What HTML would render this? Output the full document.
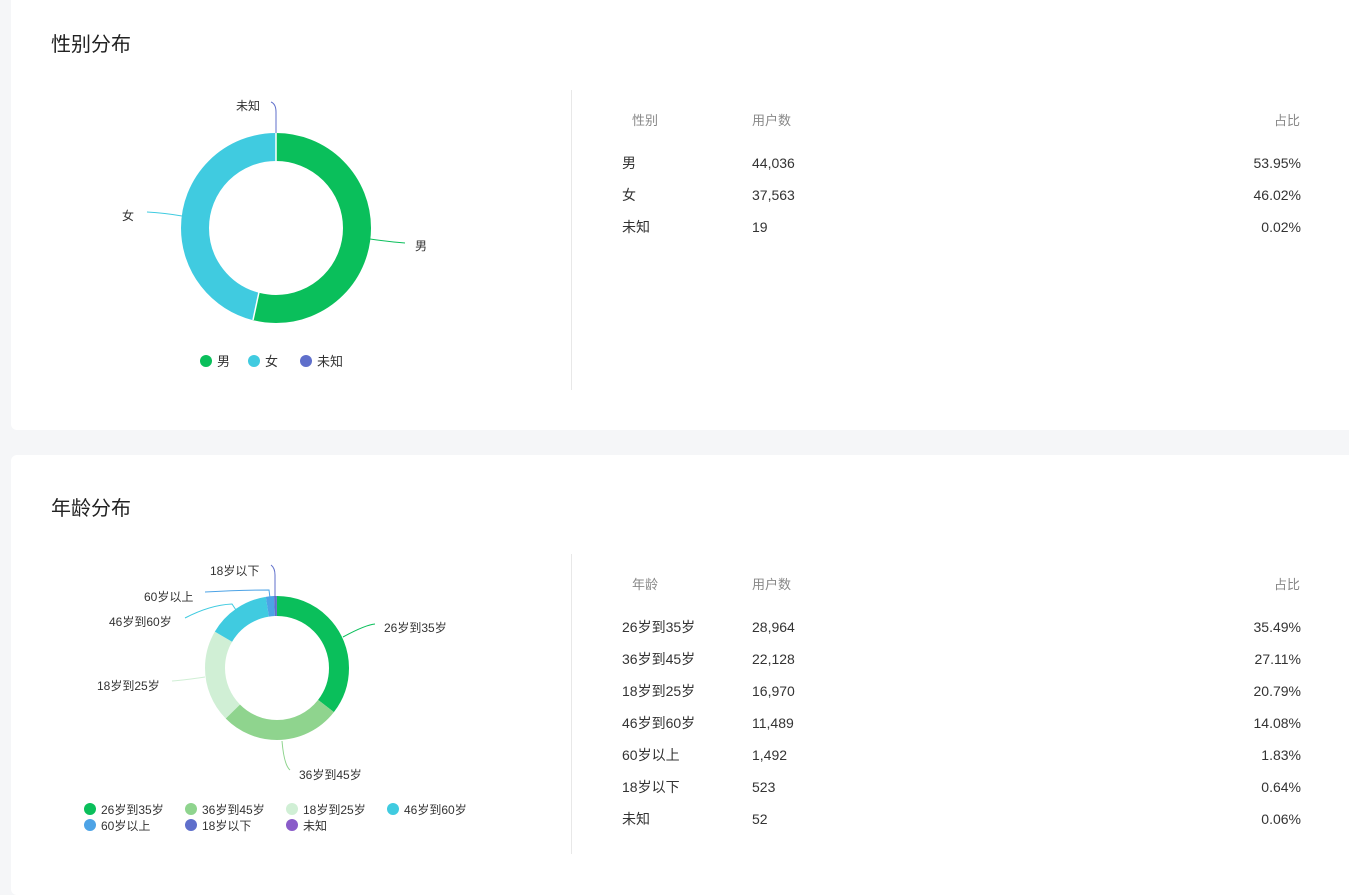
<!DOCTYPE html>
<html><head><meta charset="utf-8"><style>
body{margin:0;width:1349px;height:879px;background:#f5f6f8;font-family:"Liberation Sans","Noto Sans CJK SC",sans-serif;position:relative;overflow:hidden;color:#333}
.card{position:absolute;left:11px;width:1345px;background:#fff;border-radius:6px}
.t{position:absolute;white-space:nowrap}
.title{font-size:20px;color:#222}
.h{font-size:13px;color:#888}
.r{font-size:14px;color:#333}
.c{margin-top:-2px}
.num{right:48px;text-align:right}
.lbl{font-size:12px;color:#333}
.vl{position:absolute;left:571px;width:1px;background:#e8e8e8}
.dot{display:inline-block;width:12px;height:12px;border-radius:50%;vertical-align:-1px;margin-right:5px}
</style></head><body>
<div class="card" style="top:-10px;height:440px"></div>
<div class="card" style="top:455px;height:440px"></div>

<div class="t title" style="left:51px;top:28px">性别分布</div>
<div class="vl" style="top:90px;height:300px"></div>
<svg style="position:absolute;left:0;top:0" width="560" height="430">
<g transform="rotate(-90 276 228)" fill="none" stroke-width="28">
<circle cx="276" cy="228" r="81" stroke="#0abf5b" stroke-dasharray="274.57 600"/>
<circle cx="276" cy="228" r="81" stroke="#40cbe0" stroke-dasharray="234.21 600" stroke-dashoffset="-274.57"/>
</g>
<line x1="276" y1="133" x2="276" y2="161" stroke="#fff" stroke-width="1.5"/>
<line x1="253" y1="320" x2="259" y2="292" stroke="#fff" stroke-width="1.5"/>
<path d="M370 239 Q390 242 405 243" stroke="#0abf5b" fill="none"/>
<path d="M182 216 Q165 213 147 212" stroke="#40cbe0" fill="none"/>
<path d="M276 133 L276 112 Q276 104 271 102" stroke="#5f6fcb" fill="none"/>
</svg>
<div class="t lbl" style="left:415px;top:237px">男</div>
<div class="t lbl" style="left:122px;top:207px">女</div>
<div class="t lbl" style="left:236px;top:97px">未知</div>
<div class="t" style="left:200px;top:351px;font-size:13px"><span class="dot" style="background:#0abf5b"></span>男<span style="display:inline-block;width:18px"></span><span class="dot" style="background:#40cbe0"></span>女<span style="display:inline-block;width:22px"></span><span class="dot" style="background:#5f6fcb"></span>未知</div>

<div class="t h" style="left:632px;top:110px">性别</div>
<div class="t h" style="left:752px;top:110px">用户数</div>
<div class="t h" style="right:49px;top:110px">占比</div>
<div class="t r c" style="left:622px;top:155px">男</div><div class="t r" style="left:752px;top:155px">44,036</div><div class="t r num" style="top:155px">53.95%</div>
<div class="t r c" style="left:622px;top:187px">女</div><div class="t r" style="left:752px;top:187px">37,563</div><div class="t r num" style="top:187px">46.02%</div>
<div class="t r c" style="left:622px;top:219px">未知</div><div class="t r" style="left:752px;top:219px">19</div><div class="t r num" style="top:219px">0.02%</div>

<div class="t title" style="left:51px;top:492px">年龄分布</div>
<div class="vl" style="top:554px;height:300px"></div>
<svg style="position:absolute;left:0;top:0" width="560" height="879">
<g transform="rotate(-90 277 668)" fill="none" stroke-width="20">
<circle cx="277" cy="668" r="62" stroke="#0abf5b" stroke-dasharray="138.25 600"/>
<circle cx="277" cy="668" r="62" stroke="#8fd48e" stroke-dasharray="105.61 600" stroke-dashoffset="-138.25"/>
<circle cx="277" cy="668" r="62" stroke="#d0efd5" stroke-dasharray="80.99 600" stroke-dashoffset="-243.86"/>
<circle cx="277" cy="668" r="62" stroke="#40cbe0" stroke-dasharray="54.85 600" stroke-dashoffset="-324.85"/>
<circle cx="277" cy="668" r="62" stroke="#4da3e6" stroke-dasharray="7.13 600" stroke-dashoffset="-379.70"/>
<circle cx="277" cy="668" r="62" stroke="#5f6fcb" stroke-dasharray="2.49 600" stroke-dashoffset="-386.83"/>
</g>
<path d="M343 637 Q365 625 375 624" stroke="#0abf5b" fill="none"/>
<path d="M282 741 Q284 765 290 770" stroke="#8fd48e" fill="none"/>
<path d="M205 677 Q185 680 172 681" stroke="#d0efd5" fill="none"/>
<path d="M236 610 L232 604 Q210 605 185 618" stroke="#40cbe0" fill="none"/>
<path d="M270 598 L269 590 Q240 590 205 592" stroke="#4da3e6" fill="none"/>
<path d="M275 596 L275 575 Q275 568 271 565" stroke="#5f6fcb" fill="none"/>
</svg>
<div class="t lbl" style="left:384px;top:619px">26岁到35岁</div>
<div class="t lbl" style="left:299px;top:766px">36岁到45岁</div>
<div class="t lbl" style="left:97px;top:677px">18岁到25岁</div>
<div class="t lbl" style="left:109px;top:613px">46岁到60岁</div>
<div class="t lbl" style="left:144px;top:588px">60岁以上</div>
<div class="t lbl" style="left:210px;top:562px">18岁以下</div>
<div class="t lbl" style="left:84px;top:801px"><span class="dot" style="background:#0abf5b"></span>26岁到35岁</div>
<div class="t lbl" style="left:185px;top:801px"><span class="dot" style="background:#8fd48e"></span>36岁到45岁</div>
<div class="t lbl" style="left:286px;top:801px"><span class="dot" style="background:#d0efd5"></span>18岁到25岁</div>
<div class="t lbl" style="left:387px;top:801px"><span class="dot" style="background:#40cbe0"></span>46岁到60岁</div>
<div class="t lbl" style="left:84px;top:817px"><span class="dot" style="background:#4da3e6"></span>60岁以上</div>
<div class="t lbl" style="left:185px;top:817px"><span class="dot" style="background:#5f6fcb"></span>18岁以下</div>
<div class="t lbl" style="left:286px;top:817px"><span class="dot" style="background:#8a5cc9"></span>未知</div>

<div class="t h" style="left:632px;top:574px">年龄</div>
<div class="t h" style="left:752px;top:574px">用户数</div>
<div class="t h" style="right:49px;top:574px">占比</div>
<div class="t r c" style="left:622px;top:619px">26岁到35岁</div><div class="t r" style="left:752px;top:619px">28,964</div><div class="t r num" style="top:619px">35.49%</div>
<div class="t r c" style="left:622px;top:651px">36岁到45岁</div><div class="t r" style="left:752px;top:651px">22,128</div><div class="t r num" style="top:651px">27.11%</div>
<div class="t r c" style="left:622px;top:683px">18岁到25岁</div><div class="t r" style="left:752px;top:683px">16,970</div><div class="t r num" style="top:683px">20.79%</div>
<div class="t r c" style="left:622px;top:715px">46岁到60岁</div><div class="t r" style="left:752px;top:715px">11,489</div><div class="t r num" style="top:715px">14.08%</div>
<div class="t r c" style="left:622px;top:747px">60岁以上</div><div class="t r" style="left:752px;top:747px">1,492</div><div class="t r num" style="top:747px">1.83%</div>
<div class="t r c" style="left:622px;top:779px">18岁以下</div><div class="t r" style="left:752px;top:779px">523</div><div class="t r num" style="top:779px">0.64%</div>
<div class="t r c" style="left:622px;top:811px">未知</div><div class="t r" style="left:752px;top:811px">52</div><div class="t r num" style="top:811px">0.06%</div>
</body></html>
